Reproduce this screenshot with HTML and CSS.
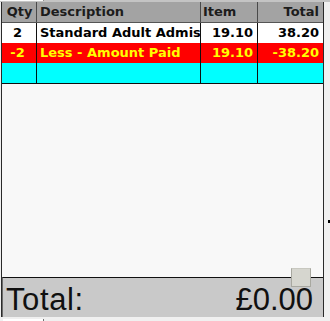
FILE: index.html
```html
<!DOCTYPE html>
<html>
<head>
<meta charset="utf-8">
<link rel="stylesheet" href="styles.css">
</head>
<body>
<div class="frame">
  <div class="topstrip"><div class="stub"></div></div>
  <div class="panel">
    <div class="grid">
      <div class="row head">
        <div class="cell qty">Qty</div>
        <div class="cell desc">Description</div>
        <div class="cell item">Item</div>
        <div class="cell total">Total</div>
      </div>
      <div class="row white">
        <div class="cell qty">2</div>
        <div class="cell desc">Standard Adult Admis</div>
        <div class="cell num item">19.10</div>
        <div class="cell num total">38.20</div>
      </div>
      <div class="row red">
        <div class="cell qty">-2</div>
        <div class="cell desc">Less - Amount Paid</div>
        <div class="cell num item">19.10</div>
        <div class="cell num total">-38.20</div>
      </div>
      <div class="row cyan">
        <div class="cell qty"></div>
        <div class="cell desc"></div>
        <div class="cell num item"></div>
        <div class="cell num total"></div>
      </div>
    </div>
    <div class="blank"></div>
    <div class="totalbar">
      <span class="tlabel">Total:</span>
      <span class="tvalue">£0.00</span>
    </div>
    <div class="knob"></div>
  </div>
  <div class="bottomstrip"><div class="stub"></div></div>
  <div class="tick"></div>
</div>
</body>
</html>
```

FILE: styles.css
```css
html, body {
  margin: 0;
  padding: 0;
  background: #f0f0f0;
}
.frame {
  position: relative;
  width: 330px;
  height: 321px;
  display: flex;
  flex-direction: column;
  overflow: hidden;
}
.topstrip {
  height: 2px;
  background: #c4c4c4;
  display: flex;
}
.topstrip .stub {
  width: 43px;
  height: 1px;
  background: #fbfbfb;
  border-right: 1px solid #909090;
}
.panel {
  position: relative;
  margin-left: 1px;
  width: 321px;
  height: 315px;
  border-left: 1px solid #2a2a2a;
  border-right: 1px solid #2a2a2a;
  background: #f8f8f8;
  display: flex;
  flex-direction: column;
}
.grid {
  display: flex;
  flex-direction: column;
  font-family: "DejaVu Sans", sans-serif;
  font-weight: bold;
  font-size: 13px;
}
.row {
  display: grid;
  grid-template-columns: 35px 164px 57px 65px;
  height: 20px;
  line-height: 20px;
}
.cell {
  box-sizing: border-box;
  border-right: 1px solid #101010;
  overflow: hidden;
  white-space: nowrap;
}
.cell.total {
  border-right: none;
}
.head {
  background: #a3a3a3;
  color: #1c1c1c;
  height: 20px;
  border-bottom: 1px solid #555;
  line-height: 19px;
}
.head .cell {
  border-right-color: #4a4a4a;
}
.qty {
  text-align: center;
  padding-right: 3px;
}
.head .qty {
  padding-right: 0;
  padding-left: 1px;
}
.desc {
  padding-left: 3px;
}
.head .item {
  padding-left: 2px;
}
.num, .head .total {
  text-align: right;
  padding-right: 4px;
}
.white {
  background: #ffffff;
  color: #000000;
}
.red {
  background: #ff0000;
  color: #ffff00;
}
.cyan {
  background: #00ffff;
  border-bottom: 1px solid #101010;
}
.blank {
  flex: 1;
}
.totalbar {
  height: 40px;
  box-sizing: border-box;
  border-top: 1px solid #101010;
  border-left: 1px solid #6a6a6a;
  background: #c9c9c9;
  display: flex;
  justify-content: space-between;
  padding: 4px 10px 0 3px;
  font-family: "Liberation Sans", Arial, sans-serif;
  font-size: 31px;
  line-height: 35px;
  color: #101010;
}
.tlabel {
  letter-spacing: 0.6px;
}
.knob {
  position: absolute;
  left: 289px;
  top: 266px;
  width: 18px;
  height: 17px;
  background: #d6d6cf;
  border: 1px solid #a8a8a0;
  border-top-color: #c8c8c0;
}
.bottomstrip {
  flex: 1;
  display: flex;
  align-items: flex-end;
  padding-left: 3px;
}
.bottomstrip .stub {
  width: 40px;
  height: 2px;
  background: #ffffff;
  border-right: 1px solid #707070;
}
.tick {
  position: absolute;
  left: 328px;
  top: 220px;
  width: 2px;
  height: 3px;
  background: #000;
}
```
